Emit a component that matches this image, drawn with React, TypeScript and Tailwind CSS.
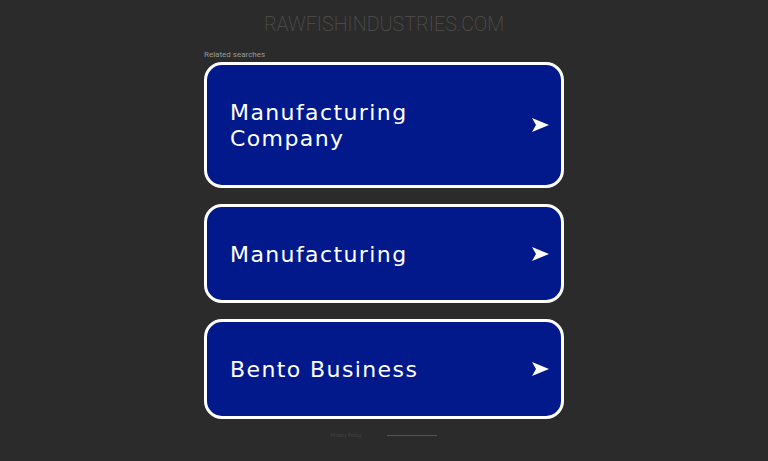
const items = [
  { label: ["Manufacturing", "Company"], h: "h-[126px]" },
  { label: ["Manufacturing"], h: "h-[99px]" },
  { label: ["Bento Business"], h: "h-[100px]" },
];

function Arrow() {
  return (
    <svg width="17" height="14" viewBox="0 0 17 14" className="shrink-0">
      <path d="M0 0 L17 7 L0 14 L4 7 Z" fill="#ffffff" />
    </svg>
  );
}

export default function App() {
  return (
    <div className="min-h-[461px] w-full bg-[#2b2b2b] flex flex-col items-center font-['Roboto',sans-serif]">
      <h1 className="mt-[12px] text-[19.7px] leading-[26px] font-extralight text-[#4f4f4f]">
        RAWFISHINDUSTRIES.COM
      </h1>
      <div className="w-[360px] mt-[12px]">
        <div className="text-[8px] leading-[10px] text-[#9a9a9a] mb-[2px]">Related searches</div>
        <div className="flex flex-col gap-[16px]">
          {items.map((it, i) => (
            <a
              key={i}
              href="#"
              className={`${it.h} flex items-center justify-between pl-[23px] pr-[12px] bg-[#02198b] border-[3px] border-white rounded-[18px]`}
            >
              <span className="text-white text-[22px] leading-[26px] font-['DejaVu_Sans',sans-serif] tracking-[1.4px] pt-[2px]">
                {it.label.map((l) => (
                  <span key={l} className="block">{l}</span>
                ))}
              </span>
              <Arrow />
            </a>
          ))}
        </div>
        <div className="flex justify-center gap-[26px] mt-[13px] text-[5px] leading-[6px] text-[#444]">
          <span>Privacy Policy</span>
          <span className="w-[50px] border-t border-[#555] mt-[3px]"></span>
        </div>
      </div>
    </div>
  );
}
